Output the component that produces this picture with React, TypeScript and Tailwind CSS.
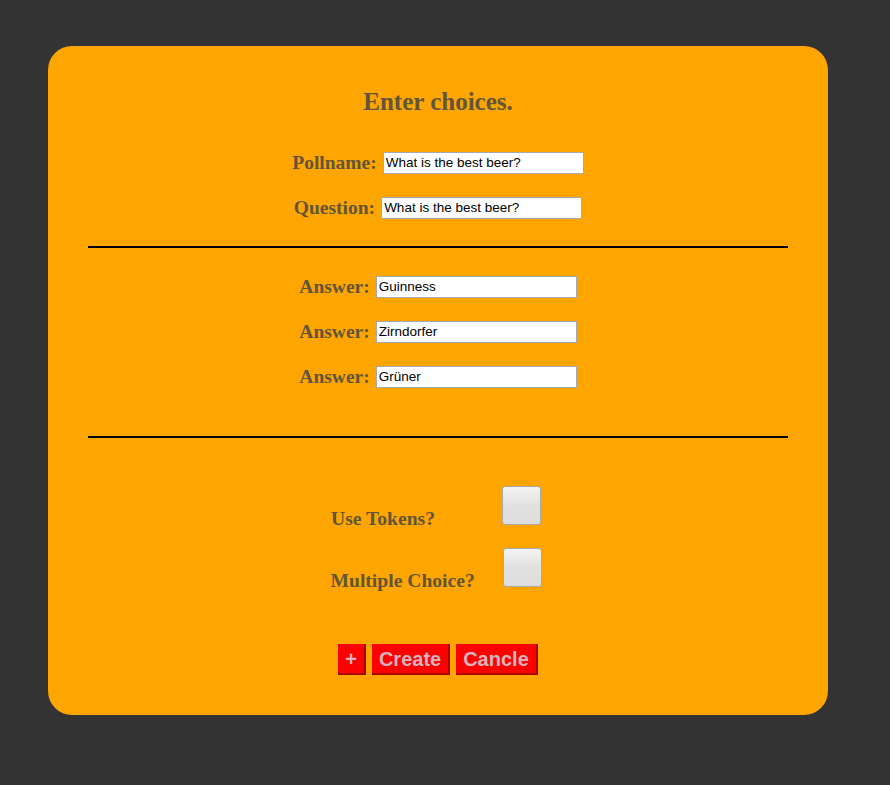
import { useState } from "react";

const labelCls =
  "font-['Liberation_Serif',serif] font-bold text-[19.5px] text-[#62553a] leading-[22px]";

function Row({ label, value }: { label: string; value: string }) {
  const [v, setV] = useState(value);
  return (
    <div className="h-[45px] flex items-center justify-center gap-[6px]">
      <span className={labelCls}>{label}</span>
      <input
        value={v}
        onChange={(e) => setV(e.target.value)}
        className="w-[201px] h-[22px] bg-white border border-[#a3a8b4] px-[2px] text-[13.5px] text-black font-['Liberation_Sans',sans-serif] outline-none"
      />
    </div>
  );
}

function Check({ checked, onClick }: { checked: boolean; onClick: () => void }) {
  return (
    <button
      onClick={onClick}
      className="w-[39px] h-[39px] rounded-[3px] border border-[#a9a9a9] bg-linear-to-b from-[#f3f3f3] via-[#e1e1e1] to-[#dddddd] flex items-center justify-center text-[#444] text-[24px]"
    >
      {checked ? "✓" : ""}
    </button>
  );
}

export default function App() {
  const [tokens, setTokens] = useState(false);
  const [multi, setMulti] = useState(false);
  const answers = ["Guinness", "Zirndorfer", "Grüner"];

  return (
    <div className="min-h-[785px] w-full bg-[#333333] pt-[46px]">
      <div className="ml-[48px] w-[780px] h-[669px] rounded-[24px] bg-[#ffa500] px-[40px] pt-[42px] flex flex-col">
        <h1 className="text-center font-['Liberation_Serif',serif] font-bold text-[25px] leading-[28px] text-[#62553a]">
          Enter choices.
        </h1>

        <div className="mt-[24px]">
          <Row label="Pollname:" value="What is the best beer?" />
          <Row label="Question:" value="What is the best beer?" />
        </div>

        <div className="mt-[16px] h-[2px] bg-black" />

        <div className="mt-[16px]">
          {answers.map((a, i) => (
            <Row key={i} label="Answer:" value={a} />
          ))}
        </div>

        <div className="mt-[37px] h-[2px] bg-black" />

        <div className="mt-[48px] pr-[4px] flex flex-col items-center gap-[23px]">
          <div className="flex items-end h-[39px]">
            <span className={labelCls + " text-[19.6px] w-[171px] -mb-[5px]"}>Use Tokens?</span>
            <Check checked={tokens} onClick={() => setTokens(!tokens)} />
          </div>
          <div className="flex items-end h-[39px]">
            <span className={labelCls + " text-[19.6px] w-[172px] -mb-[5px]"}>Multiple Choice?</span>
            <Check checked={multi} onClick={() => setMulti(!multi)} />
          </div>
        </div>

        <div className="mt-[57px] flex justify-center gap-[6px]">
          {["+", "Create", "Cancle"].map((t) => (
            <button
              key={t}
              className="h-[31px] px-[7px] bg-[#ff0000] border-r-2 border-b-2 border-[#a80000] text-[#d9b4bc] font-['Liberation_Sans',sans-serif] font-bold text-[20px] leading-[31px]"
            >
              {t}
            </button>
          ))}
        </div>
      </div>
    </div>
  );
}
